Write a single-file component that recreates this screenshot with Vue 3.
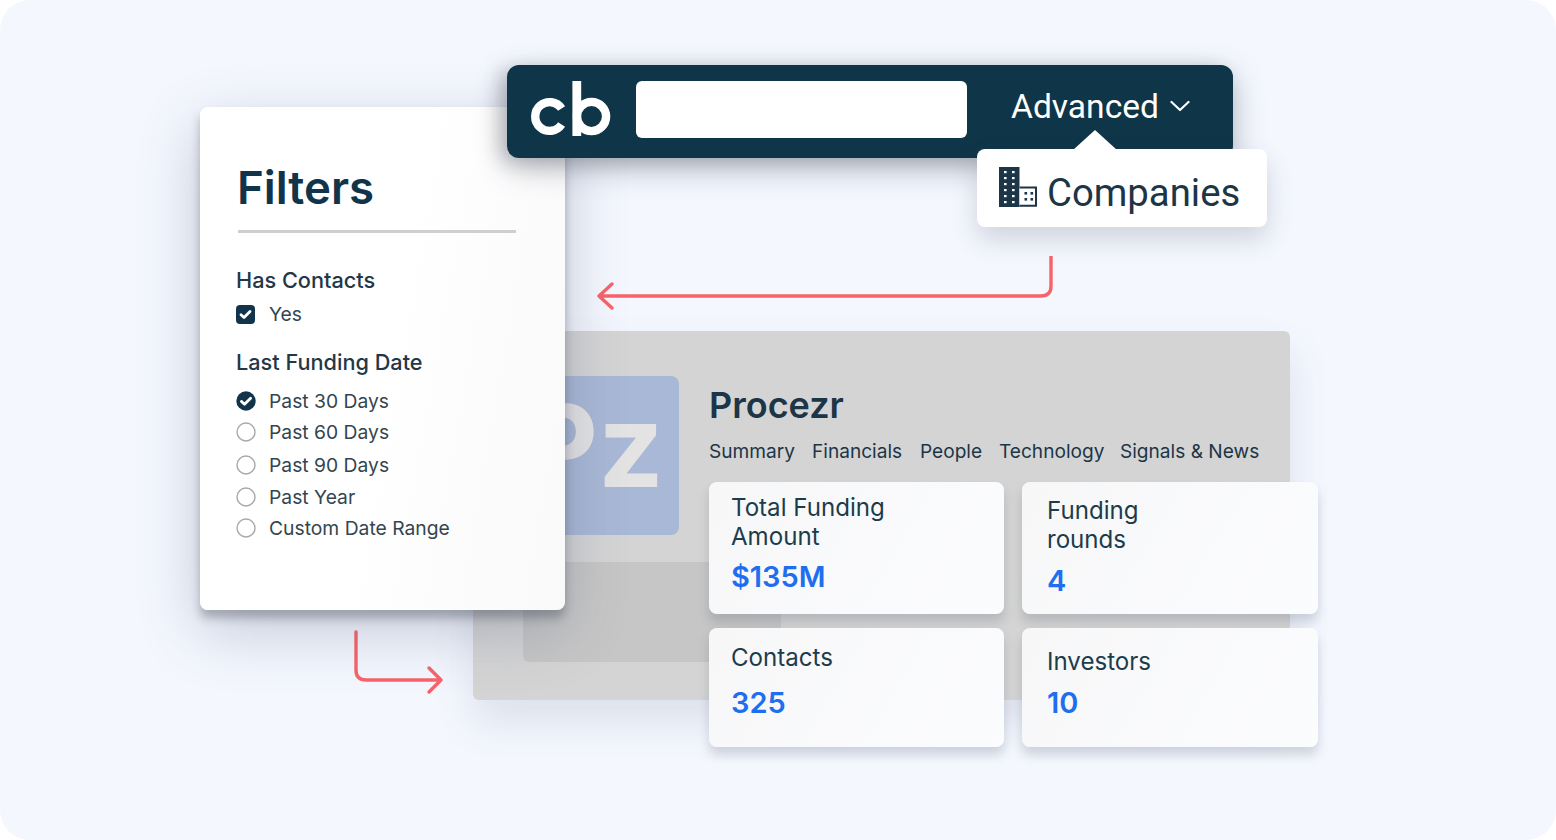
<template>
  <main class="stage">
    <!-- company profile behind everything -->
    <section class="profile">
      <div class="profile-shade"></div>
      <div class="profile-logo"><span>Pz</span></div>
      <div class="profile-head">
        <h2>Procezr</h2>
        <nav class="tabs">
          <span v-for="tab in tabs" :key="tab.name" :style="{ width: tab.width + 'px' }">{{ tab.name }}</span>
        </nav>
      </div>
    </section>

    <div class="stats">
      <article v-for="stat in stats" :key="stat.value" class="stat" :class="stat.cls">
        <p class="stat-label" v-html="stat.label"></p>
        <p class="stat-value">{{ stat.value }}</p>
      </article>
    </div>

    <svg class="arrow arrow-left" width="470" height="60" viewBox="0 0 470 60" fill="none">
      <path d="M455 1V30Q455 40 445 40H3M16 28 3 40 16 52" stroke="#f8636a" stroke-width="3.4" stroke-linecap="round" stroke-linejoin="round" />
    </svg>
    <svg class="arrow arrow-down" width="100" height="70" viewBox="0 0 100 70" fill="none">
      <path d="M5 2V40Q5 50 15 50H90M78 38 90 50 78 62" stroke="#f8636a" stroke-width="3.4" stroke-linecap="round" stroke-linejoin="round" />
    </svg>

    <aside class="filters">
      <h1>Filters</h1>
      <div class="rule"></div>
      <h3 class="group-title">Has Contacts</h3>
      <label class="option option-yes">
        <svg width="19" height="19" viewBox="0 0 19 19">
          <rect width="19" height="19" rx="4" fill="#12344a" />
          <path d="M5 9.8 8 12.6 14 6.6" fill="none" stroke="#fff" stroke-width="2.8" stroke-linecap="round" stroke-linejoin="round" />
        </svg>
        Yes
      </label>
      <h3 class="group-title group-date">Last Funding Date</h3>
      <label v-for="(item, i) in dates" :key="item.name" class="option" :style="{ height: item.h + 'px' }">
        <svg v-if="i === 0" width="20" height="20" viewBox="0 0 20 20">
          <circle cx="10" cy="10" r="9.7" fill="#12344a" />
          <path d="M5.4 10.4 8.5 13.2 14.6 7.2" fill="none" stroke="#fff" stroke-width="2.8" stroke-linecap="round" stroke-linejoin="round" />
        </svg>
        <svg v-else width="20" height="20" viewBox="0 0 20 20">
          <circle cx="10" cy="10" r="9" fill="#fff" stroke="#a9a9a9" stroke-width="1.4" />
        </svg>
        {{ item.name }}
      </label>
    </aside>

    <header class="searchbar">
      <svg class="cb" width="82" height="58" viewBox="0 0 82 58" fill="none" stroke="#fff" stroke-width="8.4">
        <path d="M32.6 27.5A14.4 14.4 0 1 0 32.6 43.5" />
        <circle cx="62.5" cy="35.5" r="14.6" />
        <path d="M47.8 0V55" stroke-width="8.8" />
      </svg>
      <div class="search-input"></div>
      <div class="advanced">
        <span>Advanced</span>
        <svg width="20" height="14" viewBox="0 0 20 14" fill="none">
          <path d="M1.5 3 10 11 18.5 3" stroke="#fff" stroke-width="2.2" stroke-linecap="round" stroke-linejoin="round" />
        </svg>
      </div>
    </header>

    <div class="dropdown">
      <span class="dropdown-tip"></span>
      <svg width="38" height="40" viewBox="0 0 38 40">
        <path d="M0 0H20.5V40H0Z" fill="#1c3547" />
        <path d="M20.5 20.5H37V38.8H20.5" fill="#fff" stroke="#1c3547" stroke-width="2" />
        <g fill="#fff">
          <rect v-for="dot in towerDots" :key="dot.k" :x="dot.x" :y="dot.y" width="2.6" height="2.2" />
        </g>
        <g fill="#1c3547">
          <rect v-for="dot in annexDots" :key="dot.k" :x="dot.x" :y="dot.y" width="2.6" height="2.6" />
        </g>
      </svg>
      <span class="dropdown-label">Companies</span>
    </div>
  </main>
</template>

<script setup>
const tabs = [
  { name: "Summary", width: 103 },
  { name: "Financials", width: 108 },
  { name: "People", width: 79 },
  { name: "Technology", width: 121 },
  { name: "Signals & News", width: 150 },
];

const stats = [
  { label: "Total Funding<br>Amount", value: "$135M", cls: "stat-a" },
  { label: "Funding<br>rounds", value: "4", cls: "stat-b" },
  { label: "Contacts", value: "325", cls: "stat-c" },
  { label: "Investors", value: "10", cls: "stat-d" },
];

const dates = [
  { name: "Past 30 Days", h: 31 },
  { name: "Past 60 Days", h: 32 },
  { name: "Past 90 Days", h: 33 },
  { name: "Past Year", h: 31 },
  { name: "Custom Date Range", h: 32 },
];

const towerDots = [];
for (let r = 0; r < 6; r++) {
  for (let c = 0; c < 2; c++) {
    towerDots.push({ k: r + "-" + c, x: 5 + c * 8, y: 4 + r * 6 });
  }
}

const annexDots = [];
for (let r = 0; r < 2; r++) {
  for (let c = 0; c < 2; c++) {
    annexDots.push({ k: r + "-" + c, x: 25.5 + c * 6, y: 25 + r * 6 });
  }
}
</script>

<style>
html,
body {
  margin: 0;
  background: #fff;
}
</style>

<style scoped>
.stage {
  position: relative;
  width: 1556px;
  height: 840px;
  overflow: hidden;
  border-radius: 30px;
  background: #f4f7fe;
  font-family: Inter, "Liberation Sans", sans-serif;
  color: #1c3547;
}

.profile {
  position: absolute;
  left: 473px;
  top: 331px;
  width: 817px;
  height: 369px;
  border-radius: 6px;
  background: #d4d4d4;
  box-shadow: 0 22px 40px rgba(80, 90, 120, 0.14);
}

.profile-shade {
  position: absolute;
  left: 50px;
  top: 231px;
  width: 258px;
  height: 100px;
  border-radius: 6px;
  background: #c6c6c6;
}

.profile-logo {
  position: absolute;
  left: 51px;
  top: 45px;
  width: 155px;
  height: 159px;
  border-radius: 8px;
  background: #a9b8d6;
  display: flex;
  align-items: center;
  justify-content: flex-end;
}

.profile-logo span {
  padding: 0 15px 20px 0;
  font-size: 115px;
  font-weight: 700;
  line-height: 1;
  color: #e3e3e3;
}

.profile-head {
  position: absolute;
  left: 236px;
  top: 52px;
}

.profile-head h2 {
  margin: 0;
  font-size: 36px;
  font-weight: 600;
  line-height: 44px;
}

.tabs {
  display: flex;
  margin-top: 12px;
  font-size: 19.1px;
  line-height: 24px;
  white-space: nowrap;
}

.stats {
  position: absolute;
  left: 709px;
  top: 482px;
  display: grid;
  grid-template-columns: 295px 296px;
  grid-template-rows: 132px 119px;
  column-gap: 18px;
  row-gap: 14px;
}

.stat {
  box-sizing: border-box;
  padding: 11px 22px 0;
  border-radius: 8px;
  background: linear-gradient(120deg, #f7f7f8, #fbfcfe);
  box-shadow: 0 8px 11px rgba(60, 70, 90, 0.2);
}

.stat-b,
.stat-d {
  padding-left: 25px;
}

.stat-b {
  padding-top: 14px;
}

.stat-c {
  padding-top: 15px;
}

.stat-d {
  padding-top: 19px;
}

.stat-label {
  margin: 0;
  font-size: 24.1px;
  line-height: 29px;
  color: #1c3c4c;
}

.stat-value {
  margin: 8px 0 0;
  font-size: 29px;
  font-weight: 600;
  line-height: 36px;
  color: #1f6ef0;
}

.stat-b .stat-value {
  margin-top: 9px;
}

.stat-c .stat-value {
  margin-top: 13px;
}

.stat-d .stat-value {
  margin-top: 9px;
}

.arrow {
  position: absolute;
}

.arrow-left {
  left: 596px;
  top: 256px;
}

.arrow-down {
  left: 351px;
  top: 630px;
}

.filters {
  position: absolute;
  left: 200px;
  top: 107px;
  box-sizing: border-box;
  width: 365px;
  height: 503px;
  padding: 52px 36px 0;
  border-radius: 8px;
  background: linear-gradient(100deg, #fff 50%, #f9f9fa);
  box-shadow: 0 8px 10px rgba(40, 45, 60, 0.3), 0 20px 60px rgba(80, 90, 120, 0.3);
}

.filters h1 {
  margin: 0 0 0 1px;
  font-size: 45.6px;
  font-weight: 600;
  line-height: 58px;
  color: #12344a;
}

.rule {
  height: 3px;
  margin: 13px 13px 0 2px;
  background: #cfcfcf;
}

.group-title {
  margin: 32px 0 0;
  font-size: 21.7px;
  font-weight: 500;
  line-height: 30px;
  color: #243746;
}

.group-date {
  margin-top: 18px;
  margin-bottom: 8px;
}

.option {
  display: flex;
  align-items: center;
  gap: 13px;
  height: 30px;
  font-size: 19.3px;
  color: #33454f;
  white-space: nowrap;
}

.option-yes {
  margin-top: 4px;
  gap: 14px;
}

.searchbar {
  position: absolute;
  left: 507px;
  top: 65px;
  box-sizing: border-box;
  width: 726px;
  height: 93px;
  padding: 0 42px 4px 22px;
  display: flex;
  align-items: center;
  border-radius: 12px;
  background: #0f3548;
  box-shadow: 0 10px 30px rgba(60, 70, 90, 0.35), -8px 4px 18px rgba(60, 60, 70, 0.22);
}

.cb {
  flex: none;
}

.search-input {
  flex: none;
  width: 331px;
  height: 57px;
  margin-left: 25px;
  border-radius: 6px;
  background: #fff;
}

.advanced {
  display: flex;
  align-items: center;
  gap: 11px;
  margin-left: 44px;
  margin-top: -7px;
  font-family: Roboto, sans-serif;
  font-size: 33.6px;
  color: #fff;
  white-space: nowrap;
}

.dropdown {
  position: absolute;
  left: 977px;
  top: 149px;
  box-sizing: border-box;
  width: 290px;
  height: 78px;
  padding-left: 22px;
  display: flex;
  align-items: center;
  gap: 10px;
  border-radius: 8px;
  background: #fff;
  box-shadow: 0 12px 26px rgba(60, 70, 90, 0.2);
}

.dropdown svg {
  margin-top: -2px;
}

.dropdown-tip {
  position: absolute;
  left: 96px;
  top: -19px;
  width: 44px;
  height: 20px;
  background: #fff;
  clip-path: polygon(50% 0, 100% 100%, 0 100%);
}

.dropdown-label {
  margin-top: 8px;
  font-family: Roboto, sans-serif;
  font-size: 38.3px;
  color: #1c3547;
}
</style>
